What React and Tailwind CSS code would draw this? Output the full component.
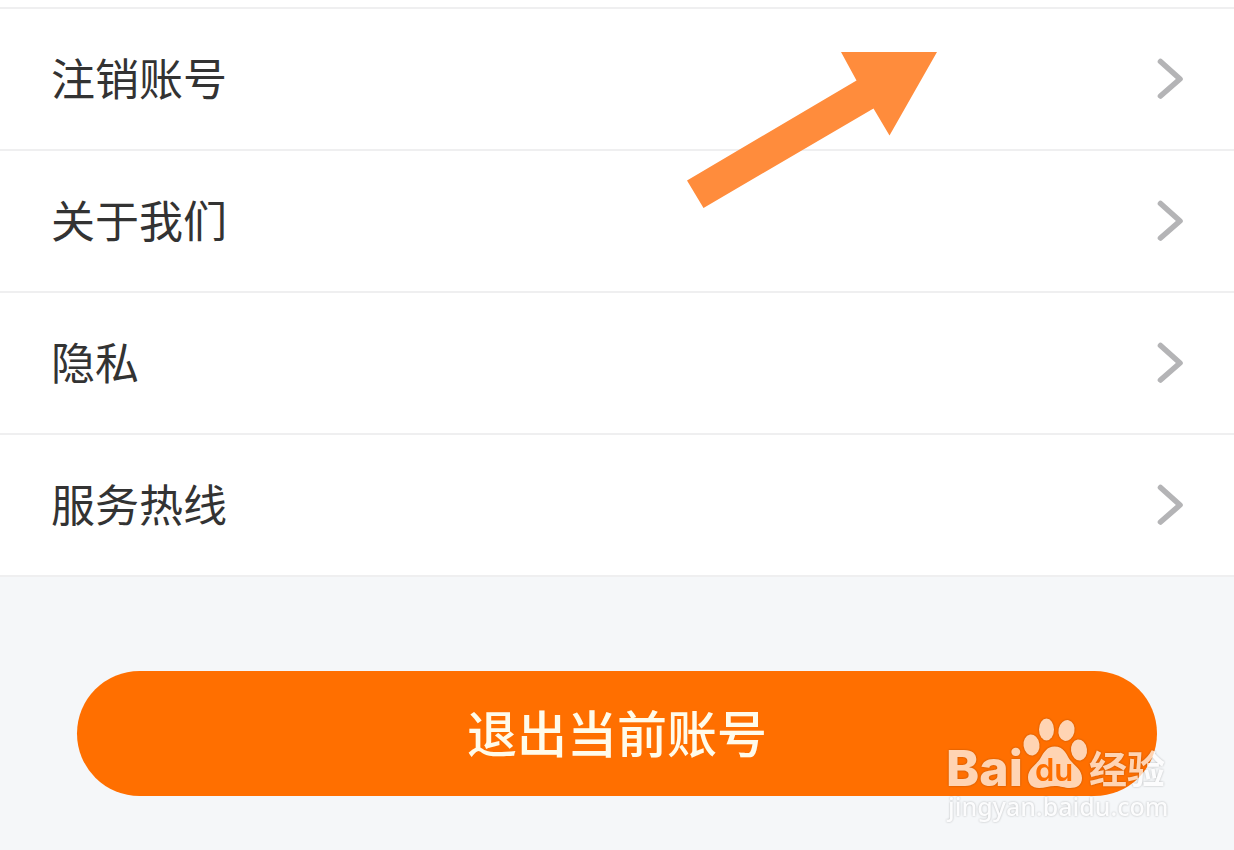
const items = ['注销账号', '关于我们', '隐私', '服务热线'];

function Chevron() {
  return (
    <svg
      className="h-11 w-8 shrink-0"
      viewBox="0 0 32 44"
      fill="none"
      stroke="#b4b4b6"
      strokeWidth="5.600"
      strokeLinecap="round"
      strokeLinejoin="round"
      aria-hidden="true"
    >
      <path d="M6.500 4.500 L26 22 L6.500 39" />
    </svg>
  );
}

function Arrow() {
  return (
    <svg
      className="pointer-events-none absolute top-[51px] left-[55.6%] h-[158px] w-[252px]"
      viewBox="0 0 252 158"
      fill="#ff8c3c"
      aria-hidden="true"
    >
      <path d="M155 1 H251 L203.500 84.500 L187.500 57.500 L17.500 157 L1 129.500 L170.500 29.500 Z" />
    </svg>
  );
}

function Watermark() {
  return (
    <svg
      className="h-[120px] w-[230px] text-white opacity-70 [filter:drop-shadow(0_0_1px_rgba(0,0,0,0.35))]"
      viewBox="-4 -4 230 120"
      fill="currentColor"
    >
      <text x="0" y="69" fontSize="50" fontWeight="800" fontFamily="Inter, sans-serif">
        Bai
      </text>
      <ellipse cx="85.500" cy="28" rx="8" ry="10.500" transform="rotate(-8 85.500 28)" />
      <ellipse cx="100.500" cy="12.500" rx="7.500" ry="11" />
      <ellipse cx="120.500" cy="13.500" rx="8" ry="10.500" transform="rotate(12 120.500 13.500)" />
      <ellipse cx="133" cy="33" rx="8" ry="10.500" transform="rotate(-8 133 33)" />
      <path d="M108.500 29.500 C118 29.500 120 37 124 43 C129 49 136 53 136 61 C136 68 131 71 124 71 C118 71 115 69 109 69 C103 69 99 71 93 71 C86 71 82 67 82 60 C82 52 90 48 94 42 C98 35 101 29.500 108.500 29.500 Z" />
      <text x="89" y="64" fontSize="31" fontWeight="600" fill="#ff6f00" fontFamily="Inter, sans-serif">
        du
      </text>
      <text x="143" y="66" fontSize="38" fontWeight="700" fontFamily="'Noto Sans CJK SC', sans-serif">
        经验
      </text>
      <text x="2" y="99" fontSize="25" fontWeight="500" fontFamily="'Noto Sans', sans-serif">
        jingyan.baidu.com
      </text>
    </svg>
  );
}

export default function App() {
  return (
    <main className="relative min-h-screen bg-[#f5f7f9] font-['Noto_Sans_CJK_SC',sans-serif]">
      <ul className="bg-white pt-[7px]">
        {items.map((label) => (
          <li key={label} className="border-t-2 border-[#efeff0]">
            <button
              type="button"
              className="flex h-[140px] w-full items-center justify-between pr-12 pl-[51px] text-left text-[44px] leading-none text-[#333]"
            >
              <span className="pb-1">{label}</span>
              <Chevron />
            </button>
          </li>
        ))}
      </ul>
      <div className="grid border-t-2 border-[#efeff0] px-[77px] pt-[94px] pb-[34px]">
        <button
          type="button"
          className="col-start-1 row-start-1 h-[125px] w-full rounded-full bg-[#ff6f00] pb-1.5 text-[50px] leading-none font-medium text-[#fffbea]"
        >
          退出当前账号
        </button>
        <div className="pointer-events-none col-start-1 row-start-1 -mr-[15px] justify-self-end pt-[42px]">
          <Watermark />
        </div>
      </div>
      <Arrow />
    </main>
  );
}
